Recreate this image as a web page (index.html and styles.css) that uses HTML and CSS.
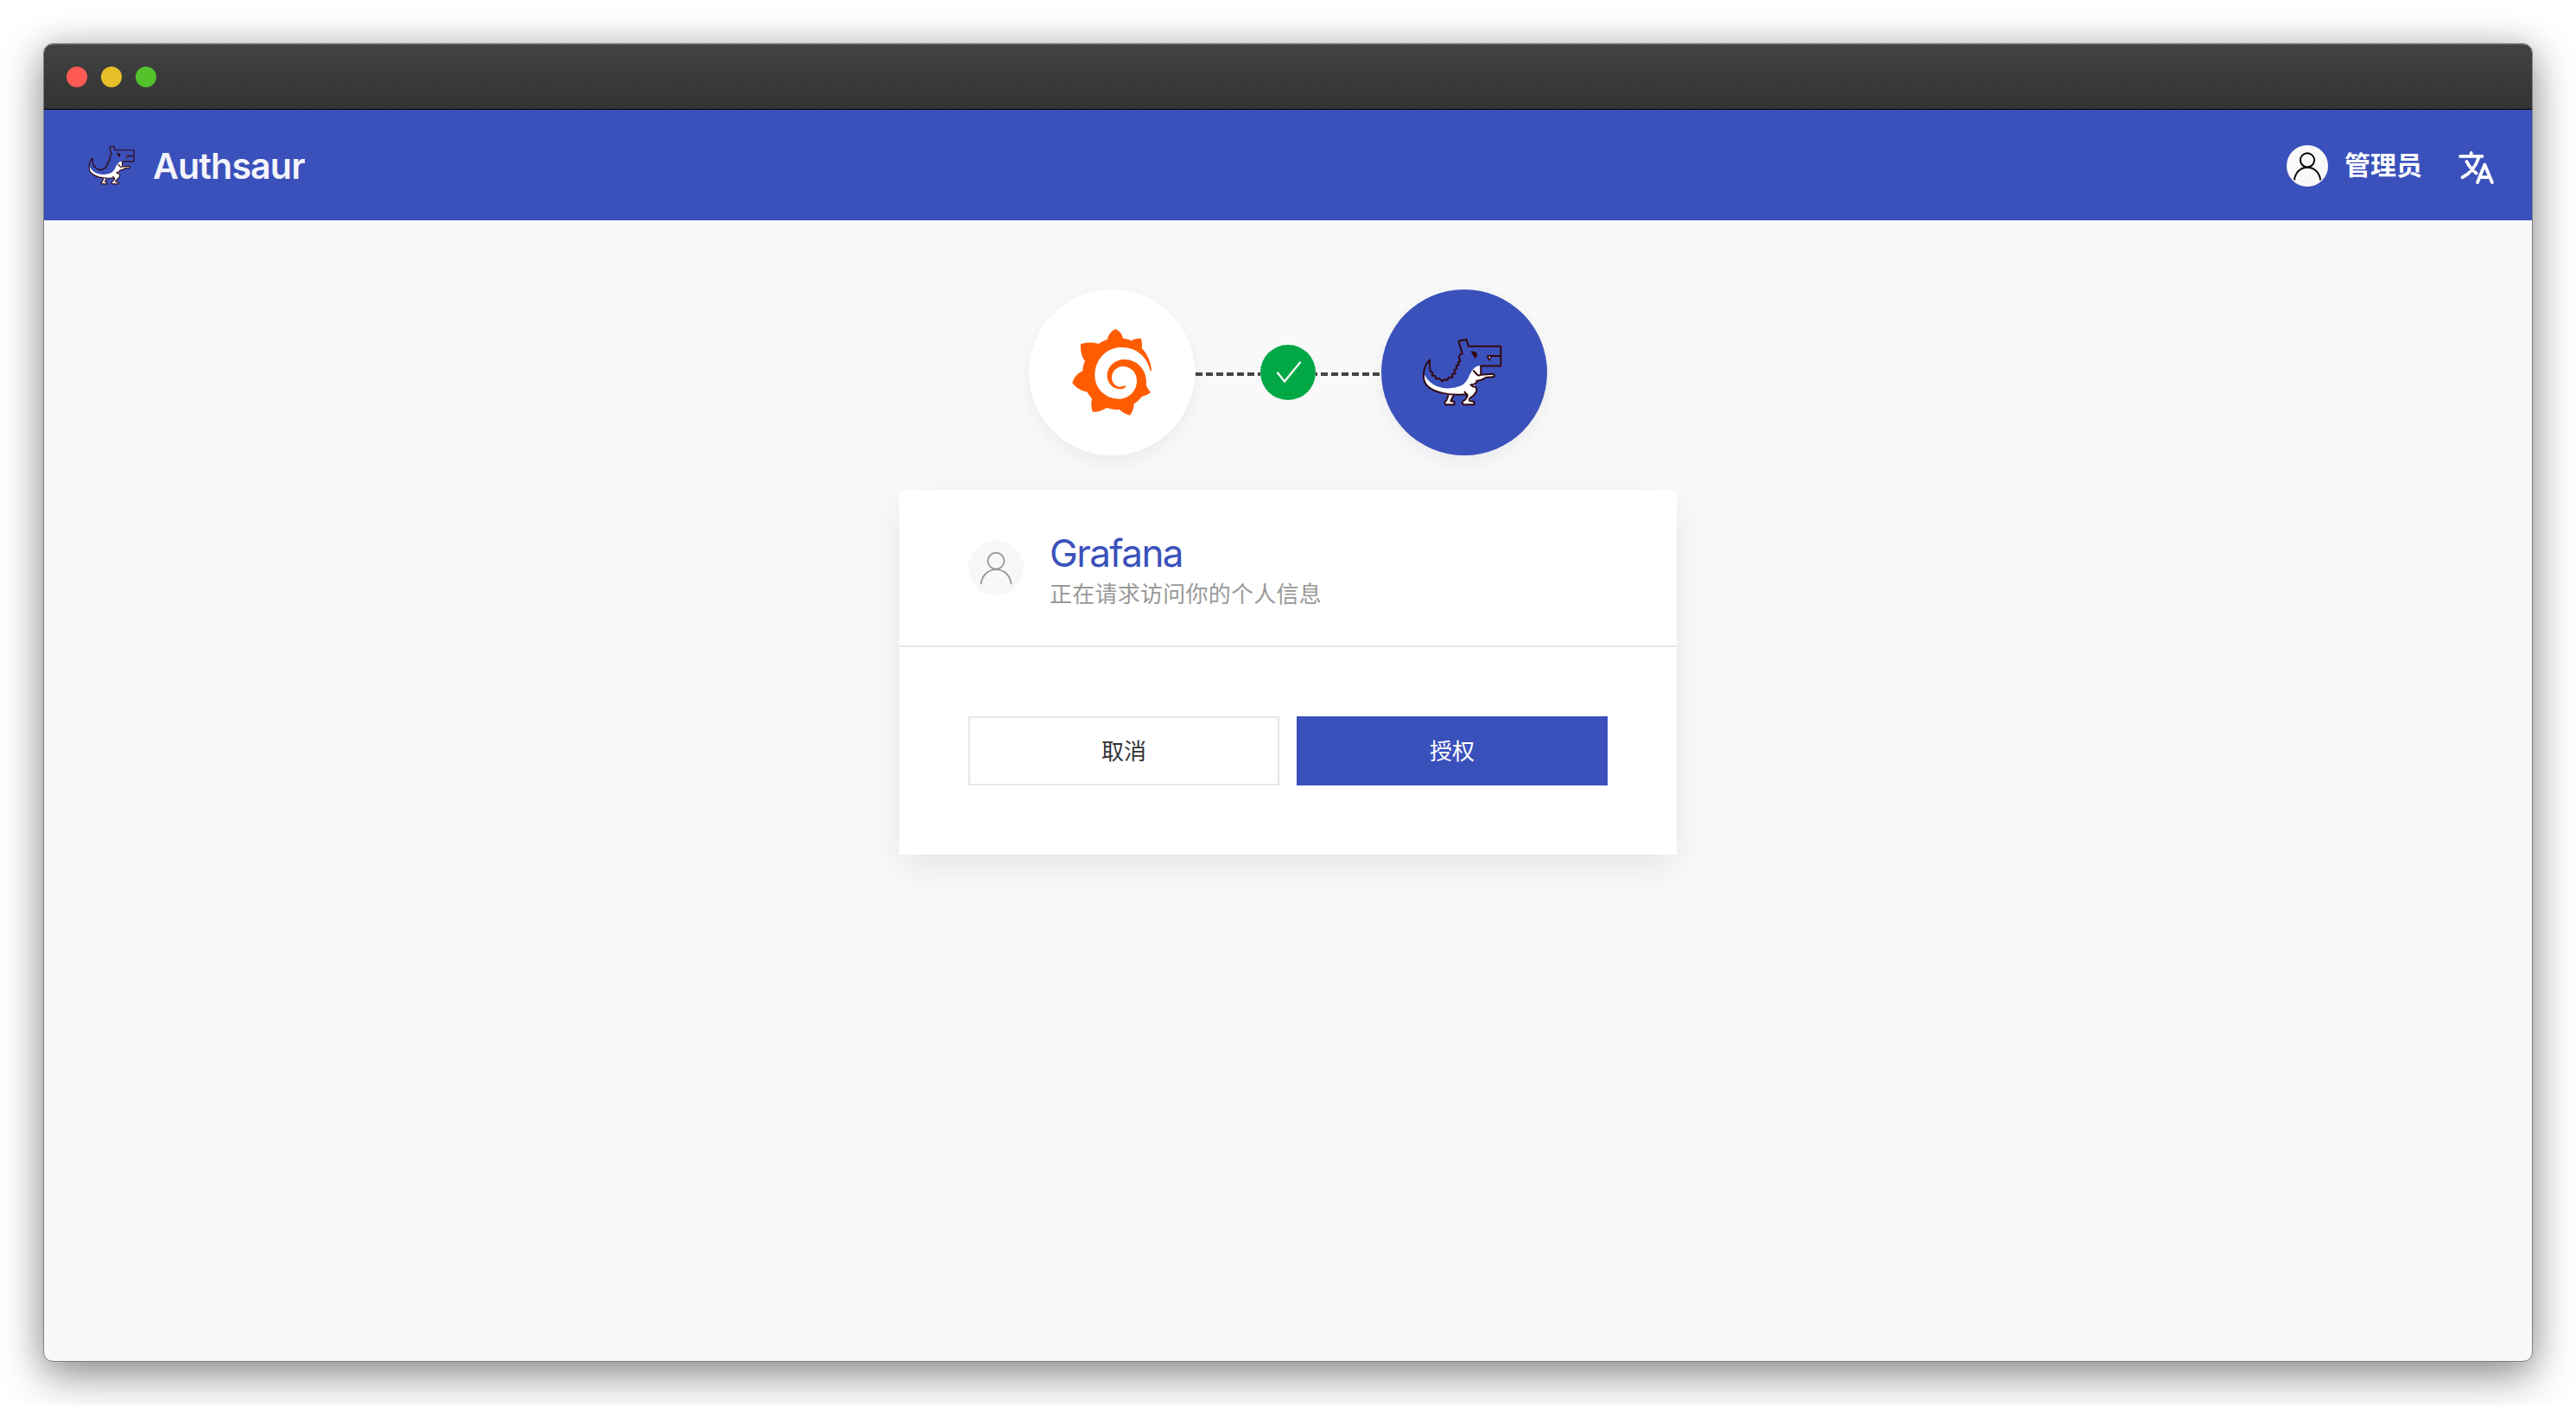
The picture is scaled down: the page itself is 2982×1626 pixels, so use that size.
FILE: index.html
```html
<!DOCTYPE html>
<html lang="zh-CN">
<head>
<meta charset="utf-8">
<title>Authsaur</title>
<link rel="stylesheet" href="styles.css">
</head>
<body>
<svg class="sprite" aria-hidden="true">
  <symbol id="dino" viewBox="18 17 278 236">
    <path fill="#fff" d="M25 140C45 188 105 205 158 180C186 162 182 120 215 113L222 115V142L264 145L266 149L240 154L212 166L200 180L207 190L207 205L183 228L200 240L197 248H165L158 240L176 214L130 213L120 232L130 240V248H100L97 240L109 213C70 207 20 190 25 140Z"/>
    <g fill="none" stroke="#320810" stroke-width="6" stroke-linejoin="round" stroke-linecap="round">
      <path d="M45 93C19 118 17 166 38 184C62 206 110 216 160 213H174M45 93C47 106 42 122 49 134L55 136L53 146L64 149L67 158L79 158L88 167L96 161L106 163L111 154L124 154L123 142L134 140L130 128L139 123L136 113L147 110L143 101L151 97L146 84Q149 71 158 72L145 28L172 22L179 46H291V114H222V141M250 80H291"/>
      <path d="M197 131L209 144Q214 149 222 145L264 142Q275 147 264 152L240 154Q224 165 207 166M212 165Q202 180 187 179L195 186Q210 184 207 202Q198 218 184 226Q178 236 190 236L200 239L198 248H164Q153 242 161 236Q173 228 176 216L166 204M109 217L103 233Q92 240 100 248H130V238L118 235L127 217"/>
    </g>
    <path fill="#320810" d="M187 63Q209 62 210 76Q210 84 201 88ZM243 77L262 80L252 98Q243 92 243 77Z"/>
    <path fill="#fff" d="M249 82H255L252 90Z"/>
  </symbol>
  <symbol id="user" viewBox="0 0 48 48">
    <g fill="none" stroke="currentColor">
      <circle cx="24" cy="17.3" r="8.1"/>
      <path d="M9 40.500C10 31.500 16 25.800 24 25.800S38 31.500 39.200 40.500"/>
    </g>
  </symbol>
</svg>

<div class="window">
  <div class="titlebar">
    <span class="dot dot-close"></span>
    <span class="dot dot-min"></span>
    <span class="dot dot-max"></span>
  </div>
  <header class="navbar">
    <div class="brand">
      <svg class="brand-logo" preserveAspectRatio="none"><use href="#dino"/></svg>
      <span class="brand-name">Authsaur</span>
    </div>
    <div class="account">
      <span class="avatar"><svg class="avatar-icon"><use href="#user"/></svg></span>
      <span class="account-name">管理员</span>
      <svg class="lang" viewBox="0 0 41 38">
        <path d="M2 5.800H27.500M14.700 2V5.800M23.500 7C20 18 13 26 4.500 30.200M9.500 12Q13.500 20 20.500 25.500M22 36L30.300 15.500L38.800 36M25.500 30.200H36" fill="none" stroke="#fff" stroke-width="3.800" stroke-linecap="round" stroke-linejoin="round"/>
      </svg>
    </div>
  </header>

  <main class="page">
    <div class="link">
      <div class="node node-app">
        <svg class="grafana" viewBox="180 180 285 306">
          <path fill="#ff5c00" d="M334 182C350 190 357 200 360 215C372 216 382 219 390 223C398 216 412 214 423 216C426 228 427 240 425 248C445 270 458 298 459 328L455 328C445 282 410 246 355 246C300 246 262 290 262 342C262 390 300 425 345 425C382 425 408 395 408 362C408 332 385 312 360 312C336 312 321 332 321 350C321 370 336 383 350 383C358 383 364 379 369 379C373 384 362 391 350 391C325 391 305 370 305 345C305 312 332 288 365 288C410 288 441 325 441 365L440 374C443 385 449 394 456 402C448 410 437 414 426 416C418 427 408 436 398 442C398 458 392 472 384 482C370 479 357 471 348 462C333 463 317 460 303 456C288 466 272 471 255 470C249 456 249 440 252 424C246 417 240 409 236 401C215 397 197 387 184 370C190 350 203 335 220 328C220 316 223 304 228 294C216 277 211 257 213 235C232 228 255 228 275 234C284 227 296 222 306 219C308 203 318 190 334 182Z"/>
        </svg>
      </div>
      <span class="dash dash-left"></span>
      <span class="check">
        <svg class="check-icon" viewBox="0 0 64 64"><path d="M20 32.500L28 42.500L46 20.500" fill="none" stroke="#fff" stroke-width="2.200" stroke-linecap="round"/></svg>
      </span>
      <span class="dash dash-right"></span>
      <div class="node node-auth">
        <svg class="node-dino"><use href="#dino"/></svg>
      </div>
    </div>

    <section class="card">
      <div class="card-head">
        <span class="app-avatar"><svg class="app-avatar-icon"><use href="#user"/></svg></span>
        <div class="app-text">
          <div class="app-name">Grafana</div>
          <div class="app-desc">正在请求访问你的个人信息</div>
        </div>
      </div>
      <div class="card-body">
        <button class="btn btn-cancel">取消</button>
        <button class="btn btn-primary">授权</button>
      </div>
    </section>
  </main>
</div>
</body>
</html>
```
FILE: styles.css
```css
* { box-sizing: border-box; }

body {
  margin: 0;
  padding: 50px;
  height: 1626px;
  background: #fff;
  overflow: hidden;
  font-family: Inter, "Noto Sans CJK SC", sans-serif;
}

.sprite { display: none; }

.window {
  display: flex;
  flex-direction: column;
  height: 1526px;
  border: 1px solid #808080;
  border-radius: 11px;
  overflow: hidden;
  background: #f9f9f9;
  box-shadow: 0 16px 50px rgba(0, 0, 0, .42), 0 0 36px rgba(0, 0, 0, .12);
}

.titlebar {
  display: flex;
  gap: 16px;
  height: 76px;
  padding: 25px 26px 0;
  background: linear-gradient(#424242, #333);
  border-top: 1px solid #5c5c5c;
  border-bottom: 1px solid #000;
}

.dot { width: 24px; height: 24px; border-radius: 50%; }
.dot-close { background: #ff5a54; }
.dot-min { background: #e6bf29; }
.dot-max { background: #53c22b; }

.navbar {
  display: flex;
  align-items: center;
  justify-content: space-between;
  height: 128px;
  padding: 0 44px 0 51px;
  background: #3a51bb;
  color: #fff;
}

.brand { display: flex; align-items: center; gap: 21px; }
.brand-logo { width: 54px; height: 46px; margin-bottom: 1px; }
.brand-name {
  padding-top: 2px;
  font-size: 41px;
  font-weight: 600;
  line-height: 48px;
  letter-spacing: -.8px;
  color: #f4f4fb;
}

.account { display: flex; align-items: center; }
.avatar {
  width: 48px;
  height: 48px;
  margin-top: 2px;
  border-radius: 50%;
  background: #f9f9f9;
  color: #000;
}
.avatar-icon { display: block; width: 48px; height: 48px; stroke-width: 1.9; }
.account-name { margin-left: 19px; font-size: 30px; font-weight: 700; line-height: 44px; }
.lang { width: 41px; height: 38px; margin: 5px 0 0 42px; }

.page {
  display: flex;
  flex-direction: column;
  align-items: center;
  flex: 1;
  padding-top: 80px;
}

.link { display: flex; align-items: center; }
.node {
  display: flex;
  align-items: center;
  justify-content: center;
  width: 192px;
  height: 192px;
  border-radius: 50%;
  box-shadow: 0 8px 20px rgba(60, 80, 120, .08);
}
.node-app { background: #fff; }
.node-auth { background: #3a51bb; }
.grafana { width: 95px; height: 102px; }
.node-dino { width: 93px; height: 79px; margin: 0 6px 2px 0; }

.dash {
  width: 76px;
  height: 4px;
  margin-top: 4px;
}
.dash-left { background: repeating-linear-gradient(90deg, transparent 0 1px, #444 1px 9px, transparent 9px 12px); }
.dash-right { background: repeating-linear-gradient(90deg, #444 0 2px, transparent 2px 6px, #444 6px 12px); }

.check { width: 64px; height: 64px; border-radius: 50%; background: #03a846; }
.check-icon { display: block; width: 64px; height: 64px; }

.card {
  width: 900px;
  margin-top: 40px;
  background: #fff;
  box-shadow: 0 16px 40px rgba(0, 0, 0, .08);
}
.card-head {
  display: flex;
  align-items: center;
  gap: 30px;
  height: 182px;
  padding: 0 80px;
  border-bottom: 2px solid #e6e6e6;
}
.app-avatar {
  width: 64px;
  height: 64px;
  border-radius: 50%;
  background: #f8f8f8;
  color: #999;
}
.app-avatar-icon { display: block; width: 56px; height: 56px; margin: 4px; stroke-width: 1.6; }
.app-text { padding-top: 7px; }
.app-name { font-size: 44px; line-height: 54px; letter-spacing: -1.6px; color: #3a51bb; }
.app-desc { font-size: 26px; line-height: 42px; letter-spacing: .25px; color: #999; }

.card-body { display: flex; gap: 20px; padding: 80px; }
.btn {
  flex: 1;
  height: 80px;
  padding: 0 0 3px;
  border: 2px solid #e6e6e6;
  background: #fff;
  font-family: inherit;
  font-size: 26px;
  color: #333;
}
.btn-primary { border-color: #3a51bb; background: #3a51bb; color: #fff; }
```
